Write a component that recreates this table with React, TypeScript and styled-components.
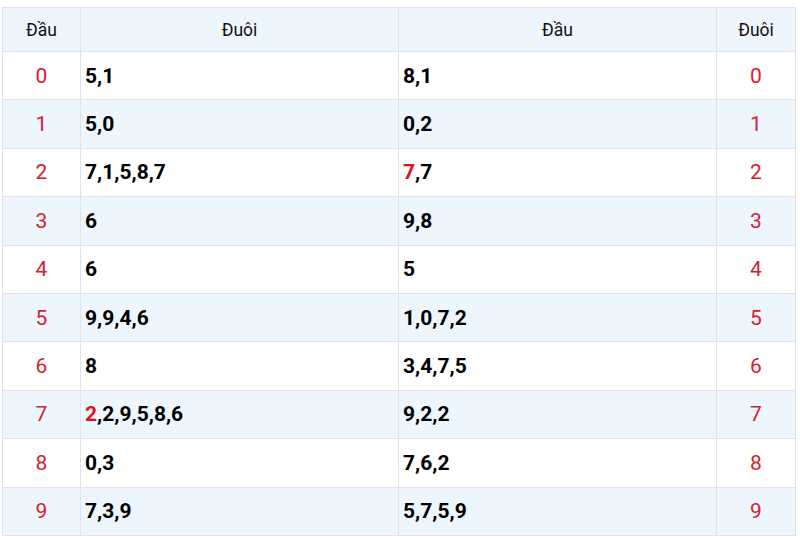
import React from "react";
import styled, { createGlobalStyle } from "styled-components";

const Global = createGlobalStyle`
  html, body { margin: 0; padding: 0; background: #ffffff; }
  body { font-family: Roboto, "Liberation Sans", Arial, sans-serif; }
`;

const Page = styled.div`
  padding: 7px 5px 0 2px;
`;

const Table = styled.table`
  width: 793px;
  border-collapse: collapse;
  table-layout: fixed;
  font-family: Roboto, "Liberation Sans", Arial, sans-serif;
`;

const HeadRow = styled.tr`
  height: 44px;
  background: #eef6fd;
`;

const Row = styled.tr<{ $alt: boolean }>`
  height: 48.4px;
  background: ${(p) => (p.$alt ? "#eef6fd" : "#ffffff")};
`;

const HeadCell = styled.th`
  border: 1px solid #dde3e9;
  font-weight: 400;
  font-size: 17.5px;
  color: #111111;
  text-align: center;
  padding: 0;
`;

const KeyCell = styled.td`
  border: 1px solid #dde3e9;
  color: #d8202c;
  font-size: 21px;
  text-align: center;
  padding: 0;
`;

const ValueCell = styled.td`
  border: 1px solid #dde3e9;
  color: #000000;
  font-size: 21px;
  font-weight: 700;
  text-align: left;
  padding: 0 0 0 4px;
`;

const Hot = styled.span`
  color: #e0101e;
`;

type Cell = { hot?: string; rest: string };

const rows: { dau: Cell; duoi: Cell }[] = [
  { dau: { rest: "5,1" }, duoi: { rest: "8,1" } },
  { dau: { rest: "5,0" }, duoi: { rest: "0,2" } },
  { dau: { rest: "7,1,5,8,7" }, duoi: { hot: "7", rest: ",7" } },
  { dau: { rest: "6" }, duoi: { rest: "9,8" } },
  { dau: { rest: "6" }, duoi: { rest: "5" } },
  { dau: { rest: "9,9,4,6" }, duoi: { rest: "1,0,7,2" } },
  { dau: { rest: "8" }, duoi: { rest: "3,4,7,5" } },
  { dau: { hot: "2", rest: ",2,9,5,8,6" }, duoi: { rest: "9,2,2" } },
  { dau: { rest: "0,3" }, duoi: { rest: "7,6,2" } },
  { dau: { rest: "7,3,9" }, duoi: { rest: "5,7,5,9" } },
];

const Value = ({ c }: { c: Cell }) => (
  <ValueCell>
    {c.hot && <Hot>{c.hot}</Hot>}
    {c.rest}
  </ValueCell>
);

export default function App() {
  return (
    <Page>
      <Global />
      <Table>
        <colgroup>
          <col style={{ width: 78 }} />
          <col style={{ width: 318 }} />
          <col style={{ width: 318 }} />
          <col style={{ width: 79 }} />
        </colgroup>
        <thead>
          <HeadRow>
            <HeadCell>Đầu</HeadCell>
            <HeadCell>Đuôi</HeadCell>
            <HeadCell>Đầu</HeadCell>
            <HeadCell>Đuôi</HeadCell>
          </HeadRow>
        </thead>
        <tbody>
          {rows.map((r, i) => (
            <Row key={i} $alt={i % 2 === 1}>
              <KeyCell>{i}</KeyCell>
              <Value c={r.dau} />
              <Value c={r.duoi} />
              <KeyCell>{i}</KeyCell>
            </Row>
          ))}
        </tbody>
      </Table>
    </Page>
  );
}
